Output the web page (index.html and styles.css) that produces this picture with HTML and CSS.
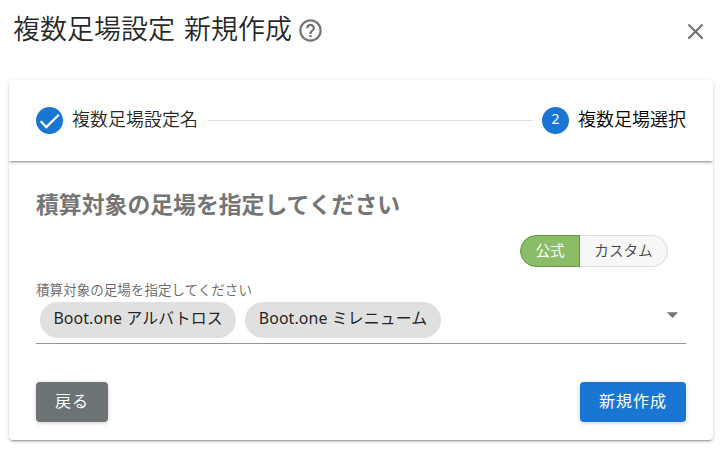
FILE: index.html
```html
<!DOCTYPE html>
<html lang="ja">
<head>
    <meta charset="UTF-8">
    <meta name="viewport" content="width=device-width, initial-scale=1.0">
    <title>複数足場設定 新規作成</title>
    <link rel="stylesheet" href="styles.css">
</head>
<body>

    <header class="dialog-header">
        <h1 class="title">複数足場設定 新規作成</h1>
        <svg class="help-icon" viewBox="0 0 24 24"><path d="M11 18h2v-2h-2v2zm1-16C6.48 2 2 6.48 2 12s4.48 10 10 10 10-4.48 10-10S17.52 2 12 2zm0 18c-4.41 0-8-3.59-8-8s3.59-8 8-8 8 3.59 8 8-3.59 8-8 8zm0-14c-2.21 0-4 1.79-4 4h2c0-1.1.9-2 2-2s2 .9 2 2c0 2-3 1.75-3 5h2c0-2.25 3-2.5 3-5 0-2.21-1.79-4-4-4z"/></svg>
        <svg class="close-icon" viewBox="0 0 24 24"><path d="M19 6.41L17.59 5 12 10.59 6.41 5 5 6.41 10.59 12 5 17.59 6.41 19 12 13.41 17.59 19 19 17.59 13.41 12z"/></svg>
    </header>

    <main class="stepper">
        <div class="stepper-header">
            <div class="step">
                <span class="step-circle">
                    <svg class="check-icon" viewBox="0 0 27 27"><path d="M4.7 14.3l5.6 5.8L22.8 7.7"/></svg>
                </span>
                <span class="step-label">複数足場設定名</span>
            </div>
            <div class="divider"></div>
            <div class="step active">
                <span class="step-circle">2</span>
                <span class="step-label">複数足場選択</span>
            </div>
        </div>

        <div class="stepper-content">
            <h2 class="heading">積算対象の足場を指定してください</h2>

            <div class="toggle">
                <button class="toggle-btn selected">公式</button>
                <button class="toggle-btn">カスタム</button>
            </div>

            <div class="select">
                <label class="select-label">積算対象の足場を指定してください</label>
                <div class="select-row">
                    <span class="chip">Boot.one アルバトロス</span>
                    <span class="chip">Boot.one ミレニューム</span>
                    <svg class="arrow-icon" viewBox="0 0 24 24"><path d="M7 10l5 5 5-5z"/></svg>
                </div>
            </div>

            <div class="actions">
                <button class="btn btn-back">戻る</button>
                <button class="btn btn-create">新規作成</button>
            </div>
        </div>
    </main>

</body>
</html>
```
FILE: styles.css
```css
* {
    box-sizing: border-box;
}

body {
    font-family: 'Noto Sans', 'Noto Sans CJK JP', sans-serif;
    font-weight: 350;
    background-color: #fff;
    color: rgba(0, 0, 0, 0.87);
    margin: 0;
    min-height: 100vh;
}

button {
    font-family: inherit;
    font-weight: inherit;
    padding: 0;
    cursor: pointer;
}

.dialog-header {
    display: flex;
    align-items: center;
    height: 60px;
    padding: 0 14px 0 13px;
}

.title {
    font-size: 27px;
    font-weight: 350;
    line-height: 36px;
    margin: 0;
    padding-bottom: 2px;
    word-spacing: 2px;
    white-space: nowrap;
}

.help-icon {
    width: 27px;
    height: 27px;
    margin-left: 5px;
    fill: #757575;
}

.close-icon {
    width: 27px;
    height: 27px;
    margin-left: auto;
    margin-top: 3px;
    fill: #757575;
}

.stepper {
    width: 704px;
    height: 360px;
    margin: 20px 0 0 9px;
    border-radius: 4px;
    background-color: #fff;
    box-shadow: 0 3px 1px -2px rgba(0, 0, 0, 0.2), 0 2px 2px 0 rgba(0, 0, 0, 0.14), 0 1px 5px 0 rgba(0, 0, 0, 0.12);
}

.stepper-header {
    display: flex;
    align-items: center;
    height: 81px;
    padding: 0 27px;
    border-radius: 4px 4px 0 0;
    box-shadow: 0 3px 1px -2px rgba(0, 0, 0, 0.2), 0 2px 2px 0 rgba(0, 0, 0, 0.14), 0 1px 5px 0 rgba(0, 0, 0, 0.12);
    clip-path: inset(0 0 -8px 0);
}

.step {
    display: flex;
    align-items: center;
}

.step-circle {
    display: flex;
    align-items: center;
    justify-content: center;
    width: 27px;
    height: 27px;
    margin-right: 9px;
    border-radius: 50%;
    background-color: #1976d2;
    color: #fff;
    font-size: 14px;
    font-weight: 400;
    line-height: 24px;
    padding-bottom: 3px;
}

.step:first-child .step-circle {
    padding-bottom: 0;
}

.check-icon {
    width: 27px;
    height: 27px;
    fill: none;
    stroke: #fff;
    stroke-width: 2.3;
}

.step-label {
    font-size: 18px;
    line-height: 24px;
    padding-bottom: 3px;
}

.active .step-label {
    color: #000;
}

.divider {
    flex: 1;
    height: 1px;
    margin: 0 9px;
    background-color: #e0e0e0;
}

.stepper-content {
    padding: 28px 27px 18px;
}

.heading {
    font-size: 22.85px;
    font-weight: 700;
    line-height: 32px;
    color: #757575;
    margin: 0;
}

.toggle {
    display: flex;
    width: 148px;
    height: 32px;
    margin: 14px 18px 0 auto;
}

.toggle-btn {
    width: 88px;
    font-size: 14.6px;
    line-height: 28px;
    padding-bottom: 2px;
    color: #444;
    background-color: #f7f7f7;
    border: 1px solid #ddd;
    border-left: 0;
    border-radius: 0 16px 16px 0;
}

.toggle-btn.selected {
    width: 60px;
    font-weight: 400;
    color: #fff;
    background-color: #8bbd68;
    border: 1px solid #66993f;
    border-radius: 16px 0 0 16px;
}

.select {
    height: 77px;
    padding-top: 14px;
    border-bottom: 1px solid #949494;
}

.select-label {
    display: block;
    height: 21px;
    font-size: 13.55px;
    line-height: 18px;
    color: #666;
}

.select-row {
    display: flex;
    align-items: center;
    gap: 9px;
    padding-left: 4px;
}

.chip {
    width: 196px;
    height: 36px;
    border-radius: 18px;
    background-color: #e0e0e0;
    font-size: 15.9px;
    font-weight: 400;
    letter-spacing: 0.1px;
    line-height: 33px;
    text-align: center;
    white-space: nowrap;
}

.arrow-icon {
    width: 27px;
    height: 27px;
    margin-left: auto;
    margin-top: -12px;
    fill: #757575;
}

.actions {
    display: flex;
    justify-content: space-between;
    margin-top: 38px;
}

.btn {
    height: 40px;
    border: 0;
    border-radius: 4px;
    color: #fff;
    font-size: 16px;
    font-weight: 400;
    letter-spacing: 1px;
    line-height: 36px;
    padding-bottom: 3px;
    box-shadow: 0 1px 4px rgba(0, 0, 0, 0.2);
}

.btn-back {
    width: 72px;
    background-color: #6c7375;
}

.btn-create {
    width: 106px;
    background-color: #1976d2;
}
```
